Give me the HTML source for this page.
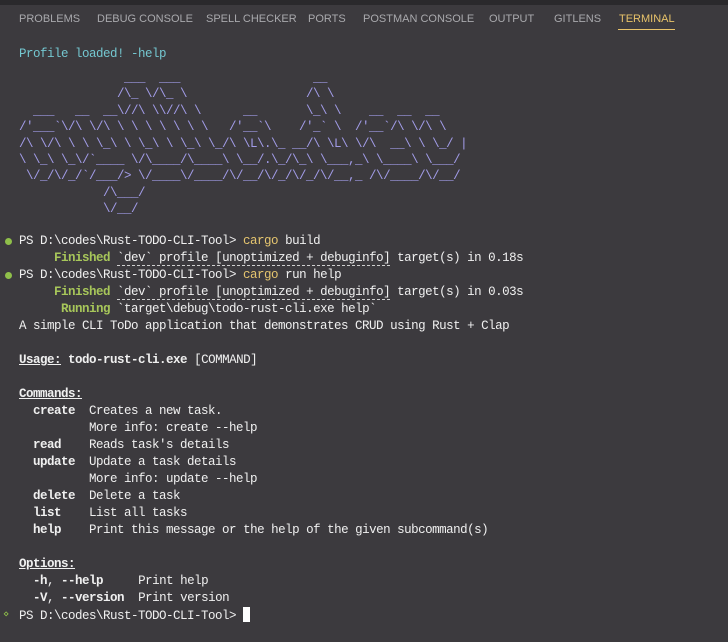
<!DOCTYPE html>
<html><head><meta charset="utf-8"><style>
html,body{margin:0;padding:0;width:728px;height:642px;overflow:hidden;background:#3c3a3e;}
.top{position:absolute;left:0;top:0;width:728px;height:5px;background:#2a292c;}
.tabs{position:absolute;top:13px;left:19px;font-family:"Liberation Sans",sans-serif;font-size:11px;color:#a9a9ad;white-space:nowrap;}
.tabs span{position:absolute;top:0;}
.ul{position:absolute;left:618px;top:29px;width:57px;height:1px;background:#e8c36a;}
pre{margin:0;position:absolute;left:19px;font-family:"Liberation Mono",monospace;font-size:12.5px;letter-spacing:-0.5px;color:#f0f0f0;white-space:pre;}
.c{color:#74c7d0}
.art{color:#a29ce8;line-height:16.4px;top:70px;}
.m{top:233px;line-height:17px;left:0;padding-left:19px;}
.g{color:#a7c65a}.y{color:#e5c56f}.b{font-weight:bold}.u{text-decoration:underline}
.d{border-bottom:1px dashed #cfcfcf}
.dot{position:absolute;left:5px;width:7px;height:7px;border-radius:50%;background:#8fbf4a;}
.cur{display:inline-block;width:7px;height:15px;background:#fff;vertical-align:-3px;}
</style></head><body>
<div class="top"></div>
<div class="tabs">
<span style="left:0">PROBLEMS</span>
<span style="left:78px">DEBUG CONSOLE</span>
<span style="left:187px">SPELL CHECKER</span>
<span style="left:289px">PORTS</span>
<span style="left:344px">POSTMAN CONSOLE</span>
<span style="left:470px">OUTPUT</span>
<span style="left:535px">GITLENS</span>
<span style="left:600px;color:#e8c36a">TERMINAL</span>
</div>
<div class="ul"></div>
<pre class="c" style="top:46px;line-height:17px">Profile loaded! -help</pre>
<pre class="art">               ___  ___                   __
              /\_ \/\_ \                 /\ \
  ___   __  __\//\ \\//\ \      __       \_\ \    __  __  __
/'___`\/\ \/\ \ \ \ \ \ \ \   /'__`\    /'_` \  /'__`/\ \/\ \
/\ \/\ \ \ \_\ \ \_\ \ \_\ \_/\ \L\.\_ __/\ \L\ \/\  __\ \ \_/ |
\ \_\ \_\/`____ \/\____/\____\ \__/.\_/\_\ \___,_\ \____\ \___/
 \/_/\/_/`/___/> \/____\/____/\/__/\/_/\/_/\/__,_ /\/____/\/__/
            /\___/
            \/__/</pre>
<div class="dot" style="top:238px"></div>
<div class="dot" style="top:272px"></div>
<pre class="m">PS D:\codes\Rust-TODO-CLI-Tool&gt; <span class="y">cargo</span> build
     <span class="g b">Finished</span> <span class="d">`dev` profile [unoptimized + debuginfo]</span> target(s) in 0.18s
PS D:\codes\Rust-TODO-CLI-Tool&gt; <span class="y">cargo</span> run help
     <span class="g b">Finished</span> <span class="d">`dev` profile [unoptimized + debuginfo]</span> target(s) in 0.03s
      <span class="g b">Running</span> `target\debug\todo-rust-cli.exe help`
A simple CLI ToDo application that demonstrates CRUD using Rust + Clap

<span class="b u">Usage:</span> <span class="b">todo-rust-cli.exe</span> [COMMAND]

<span class="b u">Commands:</span>
  <span class="b">create</span>  Creates a new task.
          More info: create --help
  <span class="b">read</span>    Reads task's details
  <span class="b">update</span>  Update a task details
          More info: update --help
  <span class="b">delete</span>  Delete a task
  <span class="b">list</span>    List all tasks
  <span class="b">help</span>    Print this message or the help of the given subcommand(s)

<span class="b u">Options:</span>
  <span class="b">-h</span>, <span class="b">--help</span>     Print help
  <span class="b">-V</span>, <span class="b">--version</span>  Print version
PS D:\codes\Rust-TODO-CLI-Tool&gt; <span class="cur"></span></pre>
<div style="position:absolute;left:3px;top:609px;color:#8fbf4a;font-size:10px;font-family:'DejaVu Sans',sans-serif">⋄</div>
</body></html>
